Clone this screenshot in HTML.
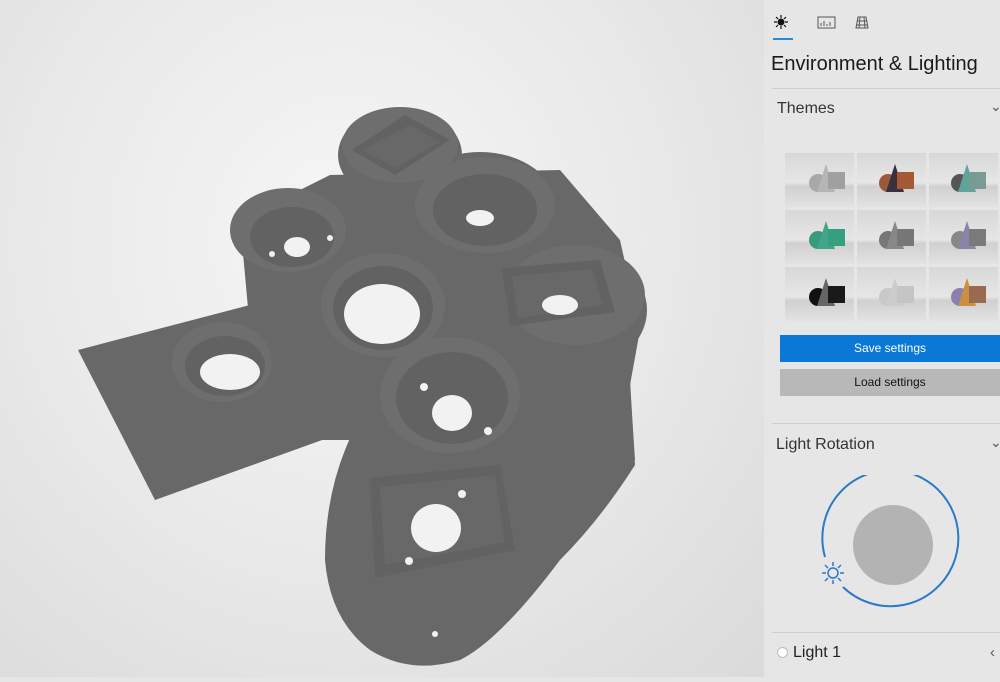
<!DOCTYPE html>
<html><head><style>
*{margin:0;padding:0;box-sizing:border-box}
body{width:1000px;height:677px;overflow:hidden;font-family:"Liberation Sans",sans-serif;position:relative;background:#e6e6e6}
.vp{position:absolute;left:0;top:0;width:764px;height:677px;background:radial-gradient(ellipse at 45% 35%,#f6f6f6 0%,#ebebeb 45%,#dadada 100%)}
.panel{position:absolute;left:764px;top:0;width:236px;height:677px;background:#e6e6e6;color:#1a1a1a}
.t{position:absolute;white-space:nowrap}
.hr{position:absolute;left:8px;right:0;height:1px;background:#cfcfcf}
.grid{position:absolute;left:21px;top:153px;width:212px;height:171px;display:grid;grid-template-columns:repeat(3,69px);grid-template-rows:repeat(3,54px);gap:3px}
.grid div{background:linear-gradient(#d8d8d8,#e6e6e6 55%,#d0d0d0 62%,#e2e2e2);position:relative}
</style></head><body>
<div class="vp">
<svg width="764" height="677" viewBox="0 0 764 677">
<g fill="#686868">
<polygon points="78,350 250,305 330,330 350,430 155,500"/>
<polygon points="240,220 330,175 560,170 620,240 640,330 630,385 635,460 560,420 350,440 300,440 250,330"/>
<path d="M380,365 L520,330 L630,380 L635,465 Q600,520 560,560 Q500,640 460,660 Q410,675 370,650 Q330,620 325,560 Q325,500 345,450 Z"/>
<ellipse cx="400" cy="155" rx="62" ry="47"/>
<ellipse cx="480" cy="210" rx="78" ry="58"/>
<ellipse cx="575" cy="310" rx="72" ry="60"/>
</g>
<g fill="#6e6e6e">
<ellipse cx="222" cy="362" rx="50" ry="40"/>
<ellipse cx="383" cy="305" rx="62" ry="52"/>
<ellipse cx="288" cy="230" rx="58" ry="42"/>
<ellipse cx="485" cy="205" rx="70" ry="48"/>
<ellipse cx="450" cy="395" rx="70" ry="58"/>
<ellipse cx="400" cy="145" rx="58" ry="38"/>
<ellipse cx="575" cy="295" rx="70" ry="50"/>
</g>
<g fill="#626262">
<ellipse cx="225" cy="366" rx="40" ry="30"/>
<ellipse cx="383" cy="308" rx="50" ry="42"/>
<ellipse cx="292" cy="237" rx="42" ry="30"/>
<ellipse cx="485" cy="210" rx="52" ry="36"/>
<ellipse cx="452" cy="398" rx="56" ry="46"/>
<polygon points="352,150 405,115 450,140 395,175"/>
<polygon points="370,478 500,465 515,550 375,578"/>
<polygon points="502,268 600,260 615,312 510,326"/>
</g>
<g fill="#686868">
<polygon points="362,150 410,125 440,142 395,168"/>
<polygon points="380,487 495,475 505,542 385,565"/>
<polygon points="512,276 592,269 603,305 518,318"/>
</g>
<g fill="#f2f2f2">
<ellipse cx="230" cy="372" rx="30" ry="18"/>
<ellipse cx="382" cy="314" rx="38" ry="30"/>
<ellipse cx="452" cy="413" rx="20" ry="18"/>
<ellipse cx="436" cy="528" rx="25" ry="24"/>
<ellipse cx="297" cy="247" rx="13" ry="10"/>
<ellipse cx="480" cy="218" rx="14" ry="8"/>
<ellipse cx="560" cy="305" rx="18" ry="10"/>
<circle cx="424" cy="387" r="4"/><circle cx="488" cy="431" r="4"/>
<circle cx="462" cy="494" r="4"/><circle cx="409" cy="561" r="4"/>
<circle cx="435" cy="634" r="3"/><circle cx="272" cy="254" r="3"/><circle cx="330" cy="238" r="3"/>
</g>
</svg>
</div>
<div class="panel">
<svg class="t" style="left:8px;top:13px" width="100" height="20" viewBox="0 0 100 20">
<circle cx="9" cy="9" r="3.5" fill="#111"/>
<g stroke="#111" stroke-width="1.2"><path d="M9 2v3M9 13v3M2 9h3M13 9h3M4 4l2 2M12 12l2 2M4 14l2-2M12 6l2-2"/></g>
<rect x="46" y="4" width="17" height="11" fill="none" stroke="#555"/>
<path d="M49 13V10M52 13V8M55 13V11M58 13V9" stroke="#555"/>
<path d="M86 4h8l2 11H84z M88 4l-1 11M92 4l1 11M85 8h10M84 12h12" fill="none" stroke="#555"/>
</svg>
<div class="t" style="left:9px;top:38px;width:20px;height:2px;background:#2b8ad6"></div>
<div class="t" style="left:7px;top:53px;font-size:20px">Environment &amp; Lighting</div>
<div class="hr" style="top:88px"></div>
<div class="t" style="left:13px;top:100px;font-size:16px;color:#333">Themes</div>
<div class="t" style="left:226px;top:98px;font-size:14px;color:#555">&#8964;</div>
<div class="grid"><div></div><div></div><div></div><div></div><div></div><div></div><div></div><div></div><div></div></div>
<svg class="t" style="left:21px;top:153px" width="212" height="171">
<g><circle cx="33" cy="30" r="9" fill="#a8a8a8"/><path d="M41 11l-9 28h18z" fill="#b5b5b5"/><rect x="43" y="19" width="17" height="17" fill="#a0a0a0"/></g>
<g transform="translate(72,0)"><circle cx="31" cy="30" r="9" fill="#9a5a3a"/><path d="M38 11l-9 28h18z" fill="#3a3040"/><rect x="40" y="19" width="17" height="17" fill="#a55a35"/></g>
<g transform="translate(144,0)"><circle cx="31" cy="30" r="9" fill="#555"/><path d="M38 11l-9 28h18z" fill="#5fa39a"/><rect x="40" y="19" width="17" height="17" fill="#7a9a95"/></g>
<g transform="translate(0,57)"><circle cx="33" cy="30" r="9" fill="#3a9a80"/><path d="M41 11l-9 28h18z" fill="#40a58a"/><rect x="43" y="19" width="17" height="17" fill="#35a080"/></g>
<g transform="translate(72,57)"><circle cx="31" cy="30" r="9" fill="#777"/><path d="M38 11l-9 28h18z" fill="#888"/><rect x="40" y="19" width="17" height="17" fill="#777"/></g>
<g transform="translate(144,57)"><circle cx="31" cy="30" r="9" fill="#888"/><path d="M38 11l-9 28h18z" fill="#8a85a8"/><rect x="40" y="19" width="17" height="17" fill="#7a7a7a"/></g>
<g transform="translate(0,114)"><circle cx="33" cy="30" r="9" fill="#111"/><path d="M41 11l-9 28h18z" fill="#666"/><rect x="43" y="19" width="17" height="17" fill="#1a1a1a"/></g>
<g transform="translate(72,114)"><circle cx="31" cy="30" r="9" fill="#c8c8c8"/><path d="M38 11l-9 28h18z" fill="#ccc"/><rect x="40" y="19" width="17" height="17" fill="#c5c5c5"/></g>
<g transform="translate(144,114)"><circle cx="31" cy="30" r="9" fill="#8a80b0"/><path d="M38 11l-9 28h18z" fill="#c89040"/><rect x="40" y="19" width="17" height="17" fill="#9a6a50"/></g>
</svg>
<div class="t" style="left:16px;top:335px;width:220px;height:27px;background:#0a78d7;color:#fff;font-size:12px;text-align:center;line-height:27px">Save settings</div>
<div class="t" style="left:16px;top:369px;width:220px;height:27px;background:#b8b8b8;color:#111;font-size:12px;text-align:center;line-height:27px">Load settings</div>
<div class="hr" style="top:423px"></div>
<div class="t" style="left:12px;top:436px;font-size:16px;color:#333">Light Rotation</div>
<div class="t" style="left:226px;top:434px;font-size:14px;color:#555">&#8964;</div>
<svg class="t" style="left:55px;top:475px" width="150" height="140">
<path d="M6 82 A68 68 0 1 1 24 112" fill="none" stroke="#2a7ac8" stroke-width="2"/>
<circle cx="74" cy="70" r="40" fill="#b3b3b3"/>
<g stroke="#2a7ac8" stroke-width="1.5" fill="none"><circle cx="14" cy="98" r="5"/><path d="M14 87v4M14 105v4M3 98h4M21 98h4M6 90l3 3M19 103l3 3M6 106l3-3M19 93l3-3"/></g>
</svg>
<div class="hr" style="top:632px"></div>
<div class="t" style="left:13px;top:647px;width:11px;height:11px;border-radius:50%;background:#fff;border:1px solid #bbb"></div>
<div class="t" style="left:29px;top:644px;font-size:16px;color:#222">Light 1</div>
<div class="t" style="left:226px;top:644px;font-size:15px;color:#555">&lsaquo;</div>
</div>
</body></html>
